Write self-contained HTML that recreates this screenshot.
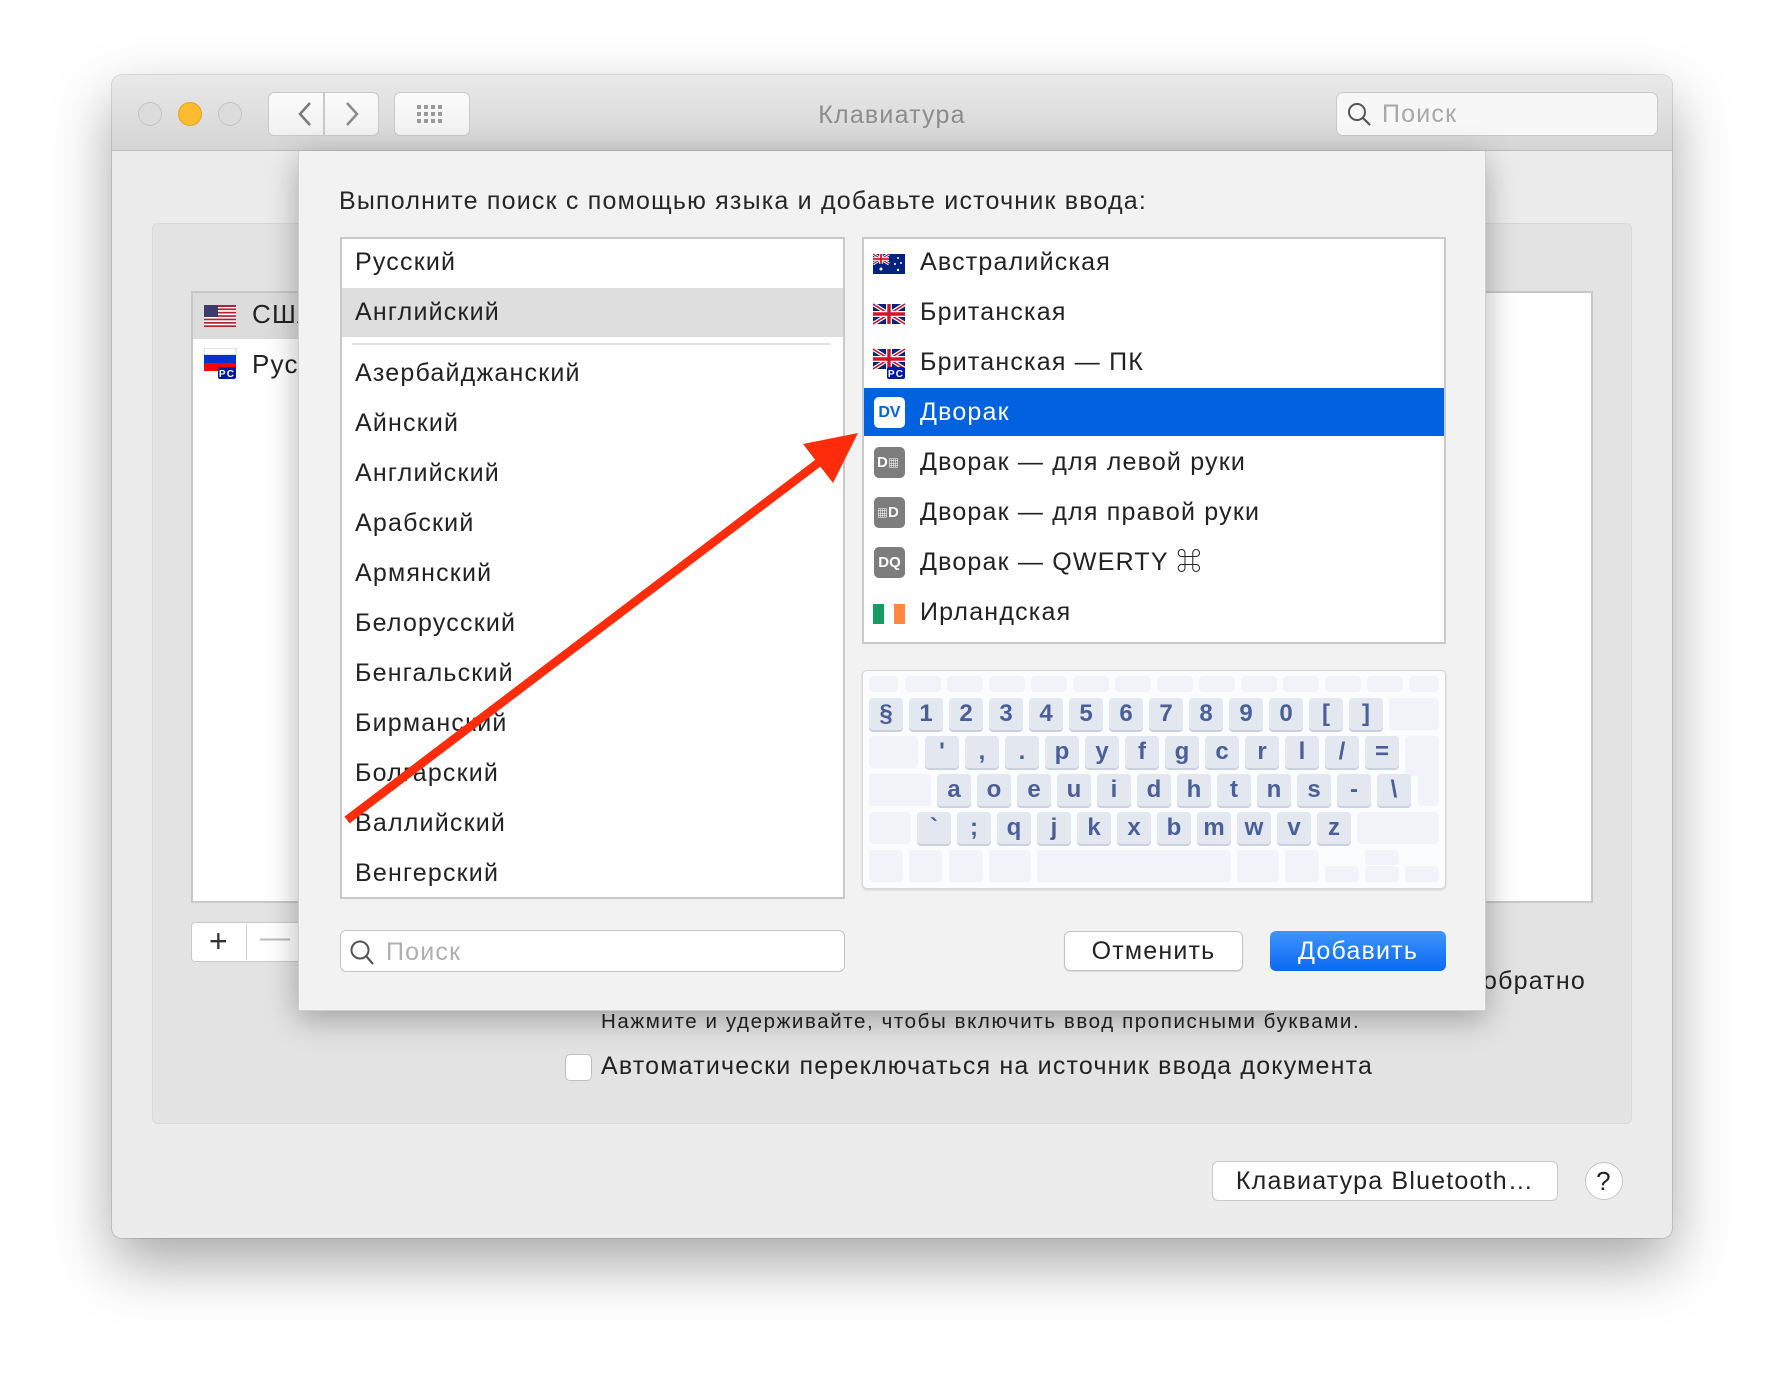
<!DOCTYPE html>
<html><head><meta charset="utf-8">
<style>
*{box-sizing:border-box;margin:0;padding:0}
body{width:1784px;height:1386px;background:#fff;position:relative;overflow:hidden;font-family:"Liberation Sans","Noto Sans CJK SC",sans-serif;color:#222;letter-spacing:1.2px}
.a{position:absolute}
.win{left:112px;top:75px;width:1560px;height:1163px;background:#ececec;border-radius:10px;box-shadow:0 25px 60px rgba(0,0,0,.35),0 0 0 1px rgba(0,0,0,.12);overflow:hidden}
.tb{left:0;top:0;width:1560px;height:76px;background:linear-gradient(#e9e9e9,#d5d5d5);border-bottom:1px solid #bdbdbd}
.tl{width:24px;height:24px;border-radius:50%;top:27px;background:#dcdcdc;border:1px solid #c4c4c4}
.btn{background:linear-gradient(#fbfbfb,#f1f1f1);border:1px solid #c9c9c9;border-radius:6px}
.row{position:absolute;left:0;height:50px;line-height:50px;font-size:25px;white-space:nowrap}
.key{position:absolute;height:32px;background:#e3e7f0;border-radius:4px;box-shadow:0 2px 0 #c8d0e2;color:#4a5e97;font-weight:bold;font-size:24px;text-align:center;line-height:32px;font-family:"Liberation Sans",sans-serif;letter-spacing:0}
.bk{position:absolute;height:32px;background:#f1f3f8;border-radius:4px}
.ic{letter-spacing:0}
</style></head><body>
<div class="a win">
 <div class="a tb"></div>
 <div class="a tl" style="left:26px"></div>
 <div class="a tl" style="left:66px;background:#fdbc2e;border-color:#e1a325"></div>
 <div class="a tl" style="left:106px"></div>
 <div class="a btn" style="left:156px;top:17px;width:56px;height:44px;border-radius:6px 0 0 6px"></div>
 <div class="a btn" style="left:212px;top:17px;width:55px;height:44px;border-radius:0 6px 6px 0"></div>
 <svg class="a" style="left:170px;top:22px" width="90" height="34"><path d="M28 6 L18 17 L28 28" fill="none" stroke="#7a7a7a" stroke-width="2.5"/><path d="M65 6 L75 17 L65 28" fill="none" stroke="#8a8a8a" stroke-width="2.5"/></svg>
 <div class="a btn" style="left:282px;top:17px;width:76px;height:44px"></div>
 <svg class="a" style="left:305px;top:30px" width="30" height="20"><g fill="#9a9a9a"><rect x="0" y="0" width="4" height="4"/><rect x="7" y="0" width="4" height="4"/><rect x="14" y="0" width="4" height="4"/><rect x="21" y="0" width="4" height="4"/><rect x="0" y="7" width="4" height="4"/><rect x="7" y="7" width="4" height="4"/><rect x="14" y="7" width="4" height="4"/><rect x="21" y="7" width="4" height="4"/><rect x="0" y="14" width="4" height="4"/><rect x="7" y="14" width="4" height="4"/><rect x="14" y="14" width="4" height="4"/><rect x="21" y="14" width="4" height="4"/></g></svg>
 <div class="a" style="left:0;width:1560px;top:26px;text-align:center;font-size:25px;color:#8c8c8c">Клавиатура</div>
 <div class="a" style="left:1224px;top:17px;width:322px;height:44px;background:#f7f7f7;border:1px solid #cacaca;border-radius:7px"></div>
 <svg class="a" style="left:1234px;top:26px" width="28" height="28"><circle cx="11" cy="11" r="8" fill="none" stroke="#555" stroke-width="2"/><path d="M17 17 L24 24" stroke="#555" stroke-width="2.2"/></svg>
 <div class="a" style="left:1270px;top:25px;font-size:25px;color:#a8a8a8">Поиск</div>
 <div class="a" style="left:40px;top:148px;width:1480px;height:901px;background:#e3e3e3;border:1px solid #d8d8d8;border-radius:6px"></div>
 <div class="a" style="left:79px;top:216px;width:1402px;height:612px;background:#fff;border:2px solid #c8c8c8"></div>
 <div class="a" style="left:81px;top:218px;width:300px;height:46px;background:#dcdcdc"></div>
 <svg class="a" style="left:92px;top:230px" width="34" height="24"><rect width="32" height="22" fill="#fff"/><g fill="#b22234"><rect y="0" width="32" height="2"/><rect y="3.4" width="32" height="1.7"/><rect y="6.8" width="32" height="1.7"/><rect y="10.2" width="32" height="1.7"/><rect y="13.6" width="32" height="1.7"/><rect y="17" width="32" height="1.7"/><rect y="20.3" width="32" height="1.7"/></g><rect width="14" height="12" fill="#3c3b6e"/></svg>
 <div class="a" style="left:140px;top:224px;font-size:26px">США</div>
 <svg class="a" style="left:92px;top:273px" width="34" height="32"><rect width="32" height="7" fill="#fff" stroke="#ccc"/><rect y="7" width="32" height="8" fill="#0033cc"/><rect y="15" width="32" height="8" fill="#f00"/><rect x="14" y="19" width="18" height="12" fill="#0019a8" rx="2"/><text x="23" y="29" font-size="10" fill="#fff" font-weight="bold" text-anchor="middle" font-family="Liberation Sans">PC</text></svg>
 <div class="a" style="left:140px;top:274px;font-size:26px">Рус</div>
 <div class="a btn" style="left:79px;top:847px;width:110px;height:40px;border-radius:4px;background:#fff"></div>
 <div class="a" style="left:134px;top:849px;width:1px;height:36px;background:#d0d0d0"></div>
 <div class="a" style="left:97px;top:848px;font-size:32px;color:#333">+</div>
 <div class="a" style="left:148px;top:846px;font-size:30px;color:#bbb">—</div>
 <div class="a" style="left:1371px;top:892px;font-size:25px">обратно</div>
 <div class="a" style="left:489px;top:935px;font-size:20.5px;letter-spacing:1.6px">Нажмите и удерживайте, чтобы включить ввод прописными буквами.</div>
 <div class="a" style="left:453px;top:979px;width:27px;height:27px;background:#fff;border:1px solid #c0c0c0;border-radius:5px"></div>
 <div class="a" style="left:489px;top:977px;font-size:25px">Автоматически переключаться на источник ввода документа</div>
 <div class="a btn" style="left:1100px;top:1086px;width:346px;height:40px;background:#fff;border-radius:6px"></div>
 <div class="a" style="left:1100px;top:1092px;width:346px;text-align:center;font-size:25px">Клавиатура Bluetooth…</div>
 <div class="a" style="left:1473px;top:1087px;width:38px;height:38px;border-radius:50%;background:#fff;border:1px solid #c4c4c4;text-align:center;line-height:36px;font-size:26px">?</div>
</div>

<div class="a" style="left:298px;top:151px;width:1188px;height:860px;background:#f2f2f2;box-shadow:0 8px 30px rgba(0,0,0,.3);border:1px solid #d0d0d0;border-top:none">
 <div class="a" style="left:40px;top:36px;font-size:25px;color:#262626">Выполните поиск с помощью языка и добавьте источник ввода:</div>
 <div class="a" style="left:41px;top:86px;width:505px;height:662px;background:#fff;border:2px solid #c9c9c9;overflow:hidden">
  <div class="row" style="top:-2px;left:13px">Русский</div>
  <div class="a" style="left:0;top:49px;width:505px;height:49px;background:#dedede"></div>
  <div class="row" style="top:48px;left:13px">Английский</div>
  <div class="a" style="left:10px;top:104px;width:478px;height:2px;background:#e2e2e2"></div>
  <div class="row" style="top:109px;left:13px">Азербайджанский</div>
  <div class="row" style="top:159px;left:13px">Айнский</div>
  <div class="row" style="top:209px;left:13px">Английский</div>
  <div class="row" style="top:259px;left:13px">Арабский</div>
  <div class="row" style="top:309px;left:13px">Армянский</div>
  <div class="row" style="top:359px;left:13px">Белорусский</div>
  <div class="row" style="top:409px;left:13px">Бенгальский</div>
  <div class="row" style="top:459px;left:13px">Бирманский</div>
  <div class="row" style="top:509px;left:13px">Болгарский</div>
  <div class="row" style="top:559px;left:13px">Валлийский</div>
  <div class="row" style="top:609px;left:13px">Венгерский</div>
 </div>
 <div class="a" style="left:563px;top:86px;width:584px;height:407px;background:#fff;border:2px solid #c9c9c9;overflow:hidden">
  <div class="a" style="left:0;top:149px;width:584px;height:48px;background:#0162e0"></div>
  <svg class="a" style="left:9px;top:13px" width="34" height="24"><rect width="32" height="20" y="2" fill="#00247d"/><path d="M0 2 L16 12 M16 2 L0 12" stroke="#fff" stroke-width="3"/><path d="M0 2 L16 12 M16 2 L0 12" stroke="#cf142b" stroke-width="1.2"/><path d="M8 2 V12 M0 7 H16" stroke="#fff" stroke-width="3.4"/><path d="M8 2 V12 M0 7 H16" stroke="#cf142b" stroke-width="1.8"/><g fill="#fff"><circle cx="8" cy="17" r="1.5"/><circle cx="25" cy="6" r="1"/><circle cx="22" cy="12" r="1"/><circle cx="28" cy="11" r="1"/><circle cx="25" cy="18" r="1.2"/></g></svg>
  <div class="row" style="top:-2px;left:56px">Австралийская</div>
  <svg class="a" style="left:9px;top:63px" width="34" height="24"><rect width="32" height="20" y="2" fill="#00247d"/><path d="M0 2 L32 22 M32 2 L0 22" stroke="#fff" stroke-width="4"/><path d="M0 2 L32 22 M32 2 L0 22" stroke="#cf142b" stroke-width="1.6"/><path d="M16 2 V22 M0 12 H32" stroke="#fff" stroke-width="6"/><path d="M16 2 V22 M0 12 H32" stroke="#cf142b" stroke-width="3.4"/></svg>
  <div class="row" style="top:48px;left:56px">Британская</div>
  <svg class="a" style="left:9px;top:108px" width="34" height="32"><rect width="32" height="20" y="2" fill="#00247d"/><path d="M0 2 L32 22 M32 2 L0 22" stroke="#fff" stroke-width="4"/><path d="M0 2 L32 22 M32 2 L0 22" stroke="#cf142b" stroke-width="1.6"/><path d="M16 2 V22 M0 12 H32" stroke="#fff" stroke-width="6"/><path d="M16 2 V22 M0 12 H32" stroke="#cf142b" stroke-width="3.4"/><rect x="14" y="20" width="18" height="12" fill="#0019a8" rx="2"/><text x="23" y="30" font-size="10" fill="#fff" font-weight="bold" text-anchor="middle" font-family="Liberation Sans">PC</text></svg>
  <div class="row" style="top:98px;left:56px">Британская — ПК</div>
  <div class="a ic" style="left:10px;top:158px;width:31px;height:31px;background:#fff;border-radius:5px;color:#0162e0;font-size:16px;text-align:center;line-height:31px;font-weight:bold">DV</div>
  <div class="row" style="top:148px;left:56px;color:#fff">Дворак</div>
  <div class="a ic" style="left:10px;top:208px;width:31px;height:31px;background:#7d7d7d;border-radius:5px;color:#fff;font-size:15px;line-height:31px;font-weight:bold;padding-left:3px">D<span style="font-size:11px">▦</span></div>
  <div class="row" style="top:198px;left:56px">Дворак — для левой руки</div>
  <div class="a ic" style="left:10px;top:258px;width:31px;height:31px;background:#7d7d7d;border-radius:5px;color:#fff;font-size:15px;line-height:31px;font-weight:bold;padding-left:3px"><span style="font-size:11px">▦</span>D</div>
  <div class="row" style="top:248px;left:56px">Дворак — для правой руки</div>
  <div class="a ic" style="left:10px;top:308px;width:31px;height:31px;background:#7d7d7d;border-radius:5px;color:#fff;font-size:15px;text-align:center;line-height:31px;font-weight:bold">DQ</div>
  <div class="row" style="top:298px;left:56px">Дворак — QWERTY ⌘</div>
  <svg class="a" style="left:9px;top:363px" width="34" height="24"><rect x="0" y="2" width="11" height="20" fill="#169b62"/><rect x="11" y="2" width="10" height="20" fill="#fff"/><rect x="21" y="2" width="11" height="20" fill="#ff883e"/></svg>
  <div class="row" style="top:348px;left:56px">Ирландская</div>
 </div>
 <div class="a" style="left:563px;top:519px;width:584px;height:219px;background:#fbfcfe;border:1px solid #d6d6d6;border-radius:5px;box-shadow:0 1px 2px rgba(0,0,0,.15)"></div>
 <div class="a" style="left:-298px;top:-151px;width:1784px;height:1386px">
  <div class="bk" style="left:868px;top:676px;width:29px;height:16px"></div>
  <div class="bk" style="left:904px;top:676px;width:36px;height:16px"></div><div class="bk" style="left:946px;top:676px;width:36px;height:16px"></div><div class="bk" style="left:988px;top:676px;width:36px;height:16px"></div><div class="bk" style="left:1030px;top:676px;width:36px;height:16px"></div><div class="bk" style="left:1072px;top:676px;width:36px;height:16px"></div><div class="bk" style="left:1114px;top:676px;width:36px;height:16px"></div><div class="bk" style="left:1156px;top:676px;width:36px;height:16px"></div><div class="bk" style="left:1198px;top:676px;width:36px;height:16px"></div><div class="bk" style="left:1240px;top:676px;width:36px;height:16px"></div><div class="bk" style="left:1282px;top:676px;width:36px;height:16px"></div><div class="bk" style="left:1324px;top:676px;width:36px;height:16px"></div><div class="bk" style="left:1366px;top:676px;width:36px;height:16px"></div>
  <div class="bk" style="left:1408px;top:676px;width:30px;height:16px"></div>
  <div class="key" style="left:868px;top:698px;width:34px">§</div><div class="key" style="left:908px;top:698px;width:34px">1</div><div class="key" style="left:948px;top:698px;width:34px">2</div><div class="key" style="left:988px;top:698px;width:34px">3</div><div class="key" style="left:1028px;top:698px;width:34px">4</div><div class="key" style="left:1068px;top:698px;width:34px">5</div><div class="key" style="left:1108px;top:698px;width:34px">6</div><div class="key" style="left:1148px;top:698px;width:34px">7</div><div class="key" style="left:1188px;top:698px;width:34px">8</div><div class="key" style="left:1228px;top:698px;width:34px">9</div><div class="key" style="left:1268px;top:698px;width:34px">0</div><div class="key" style="left:1308px;top:698px;width:34px">[</div><div class="key" style="left:1348px;top:698px;width:34px">]</div>
  <div class="bk" style="left:1388px;top:698px;width:50px"></div>
  <div class="bk" style="left:868px;top:736px;width:49px"></div>
  <div class="key" style="left:924px;top:736px;width:34px">'</div><div class="key" style="left:964px;top:736px;width:34px">,</div><div class="key" style="left:1004px;top:736px;width:34px">.</div><div class="key" style="left:1044px;top:736px;width:34px">p</div><div class="key" style="left:1084px;top:736px;width:34px">y</div><div class="key" style="left:1124px;top:736px;width:34px">f</div><div class="key" style="left:1164px;top:736px;width:34px">g</div><div class="key" style="left:1204px;top:736px;width:34px">c</div><div class="key" style="left:1244px;top:736px;width:34px">r</div><div class="key" style="left:1284px;top:736px;width:34px">l</div><div class="key" style="left:1324px;top:736px;width:34px">/</div><div class="key" style="left:1364px;top:736px;width:34px">=</div>
  <div class="bk" style="left:1404px;top:736px;width:34px;height:40px"></div>
  <div class="bk" style="left:868px;top:774px;width:62px"></div>
  <div class="key" style="left:936px;top:774px;width:34px">a</div><div class="key" style="left:976px;top:774px;width:34px">o</div><div class="key" style="left:1016px;top:774px;width:34px">e</div><div class="key" style="left:1056px;top:774px;width:34px">u</div><div class="key" style="left:1096px;top:774px;width:34px">i</div><div class="key" style="left:1136px;top:774px;width:34px">d</div><div class="key" style="left:1176px;top:774px;width:34px">h</div><div class="key" style="left:1216px;top:774px;width:34px">t</div><div class="key" style="left:1256px;top:774px;width:34px">n</div><div class="key" style="left:1296px;top:774px;width:34px">s</div><div class="key" style="left:1336px;top:774px;width:34px">-</div><div class="key" style="left:1376px;top:774px;width:34px">\</div>
  <div class="bk" style="left:1417px;top:770px;width:21px;height:36px"></div>
  <div class="bk" style="left:868px;top:812px;width:42px"></div>
  <div class="key" style="left:916px;top:812px;width:34px">`</div><div class="key" style="left:956px;top:812px;width:34px">;</div><div class="key" style="left:996px;top:812px;width:34px">q</div><div class="key" style="left:1036px;top:812px;width:34px">j</div><div class="key" style="left:1076px;top:812px;width:34px">k</div><div class="key" style="left:1116px;top:812px;width:34px">x</div><div class="key" style="left:1156px;top:812px;width:34px">b</div><div class="key" style="left:1196px;top:812px;width:34px">m</div><div class="key" style="left:1236px;top:812px;width:34px">w</div><div class="key" style="left:1276px;top:812px;width:34px">v</div><div class="key" style="left:1316px;top:812px;width:34px">z</div>
  <div class="bk" style="left:1356px;top:812px;width:82px"></div>
  <div class="bk" style="left:868px;top:850px;width:34px"></div><div class="bk" style="left:908px;top:850px;width:33px"></div><div class="bk" style="left:948px;top:850px;width:34px"></div><div class="bk" style="left:988px;top:850px;width:42px"></div><div class="bk" style="left:1036px;top:850px;width:194px"></div><div class="bk" style="left:1236px;top:850px;width:42px"></div><div class="bk" style="left:1284px;top:850px;width:34px"></div>
  <div class="bk" style="left:1324px;top:866px;width:34px;height:16px"></div><div class="bk" style="left:1364px;top:850px;width:34px;height:15px"></div><div class="bk" style="left:1364px;top:866px;width:34px;height:16px"></div><div class="bk" style="left:1404px;top:866px;width:34px;height:16px"></div>
 </div>
 <div class="a" style="left:41px;top:779px;width:505px;height:42px;background:#fff;border:1px solid #c4c4c4;border-radius:6px"></div>
 <svg class="a" style="left:49px;top:788px" width="30" height="30"><circle cx="12" cy="11" r="8.5" fill="none" stroke="#555" stroke-width="2"/><path d="M18 17 L25 25" stroke="#555" stroke-width="2.2"/></svg>
 <div class="a" style="left:87px;top:787px;font-size:25px;color:#b0b0b0">Поиск</div>
 <div class="a" style="left:765px;top:780px;width:179px;height:40px;background:#fff;border:1px solid #c4c4c4;border-radius:6px;text-align:center;line-height:38px;font-size:25px;box-shadow:0 1px 1px rgba(0,0,0,.1)">Отменить</div>
 <div class="a" style="left:971px;top:780px;width:176px;height:40px;background:linear-gradient(#3f95fb,#0b68f3);border-radius:6px;text-align:center;line-height:40px;font-size:25px;color:#fff">Добавить</div>
</div>

<svg class="a" style="left:0;top:0" width="1784" height="1386">
 <line x1="347" y1="820" x2="822" y2="460" stroke="#fe2c0a" stroke-width="8.5"/>
 <polygon points="858,433 803,444 833,483" fill="#fe2c0a"/>
</svg>
</body></html>
